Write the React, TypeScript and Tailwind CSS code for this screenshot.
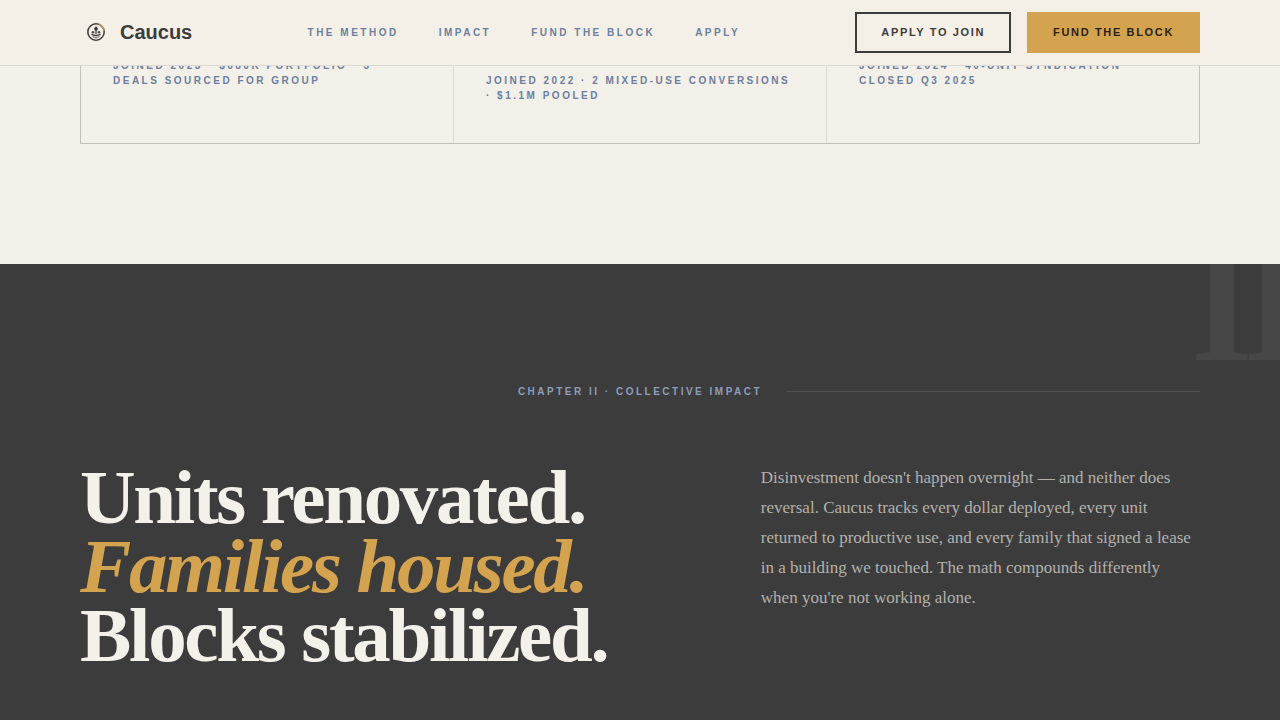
import React from 'react';

const navLinks = [
    { label: 'The Method', href: '#method' },
    { label: 'Impact', href: '#impact' },
    { label: 'Fund the Block', href: '#fund' },
    { label: 'Apply', href: '#apply' },
];

const members = [
    { id: 'first', meta: 'Joined 2023 · $680K portfolio · 3 deals sourced for group', pad: 'pt-[7px]' },
    { id: 'second', meta: 'Joined 2022 · 2 mixed-use conversions · $1.1M pooled', pad: 'pt-[22px]' },
    { id: 'third', meta: 'Joined 2024 · 40-unit syndication closed Q3 2025', pad: 'pt-[7px]' },
];

const LogoMark: React.FC = () => (
    <svg viewBox="0 0 32 32" className="w-8 h-8" fill="none" aria-hidden="true">
        <circle cx="16" cy="16" r="8.2" stroke="#3c3c3c" strokeWidth="1.5" />
        <path d="M18.5 8.2A8.2 8.2 0 0 1 24.1 15" stroke="#b98f55" strokeWidth="1.5" />
        <circle cx="16" cy="12.8" r="1.9" fill="#3c3c3c" />
        <path d="M16 10.4v7.6" stroke="#3c3c3c" strokeWidth="1.3" />
        <circle cx="13" cy="16.2" r="1.3" fill="#4a4a4a" />
        <circle cx="19" cy="16.2" r="1.3" fill="#4a4a4a" />
        <path d="M11.4 18.2c1.2 1 2.6 1.3 4.6 1.3s3.4-.3 4.6-1.3" stroke="#3c3c3c" strokeWidth="1.4" />
        <path d="M12.6 20.7c1 .6 2 .8 3.4.8s2.4-.2 3.4-.8" stroke="#5b6470" strokeWidth="1" />
    </svg>
);

const Header: React.FC = () => (
    <header className="sticky top-0 z-20 flex items-center justify-between px-20 py-3 bg-[#f4f0e8] border-b border-[#dcd8d2]">
        <a href="#top" className="flex items-center gap-2 pb-px">
            <LogoMark />
            <span className="text-xl font-bold text-[#3c3c3c]">Caucus</span>
        </a>
        <nav className="flex items-center gap-10">
            {navLinks.map((link) => (
                <a
                    key={link.href}
                    href={link.href}
                    className="text-[10px] leading-[15px] font-bold uppercase tracking-[0.25em] text-[#6b7f9e]"
                >
                    {link.label}
                </a>
            ))}
        </nav>
        <div className="flex items-center gap-4">
            <button className="px-6 py-3 border-2 border-[#3c3c3c] text-[11px] leading-[13px] font-bold uppercase tracking-[0.15em] text-[#3c3c3c]">
                Apply to Join
            </button>
            <button className="px-6 py-3 border-2 border-[#d4a34f] bg-[#d4a34f] text-[11px] leading-[13px] font-bold uppercase tracking-[0.15em] text-[#2a2118]">
                Fund the Block
            </button>
        </div>
    </header>
);

const Members: React.FC = () => (
    <section className="-mt-4 px-20 pb-30">
        <div className="grid grid-cols-3 gap-px bg-[#dcd9d3] border border-[#c3c0bb]">
            {members.map((m) => (
                <div key={m.id} className={`px-8 pb-10 bg-[#f3efe9] ${m.pad}`}>
                    <p className="text-[10px] leading-[15px] font-bold uppercase tracking-[0.25em] text-[#6b7f9e]">
                        {m.meta}
                    </p>
                </div>
            ))}
        </div>
    </section>
);

const Impact: React.FC = () => (
    <section id="impact" className="relative flex-1 overflow-hidden bg-[#3c3c3c] px-20 pt-30 pb-12">
        {/* Chapter numeral bleeding off the corner */}
        <span
            aria-hidden="true"
            className="absolute -top-[38px] -right-4 font-['Liberation_Serif',serif] text-[160px] leading-[160px] font-bold tracking-[-0.06em] text-[#474747] select-none"
        >
            II
        </span>

        <div className="flex items-center gap-6">
            <div className="flex-1" />
            <p className="text-[10px] leading-[15px] font-bold uppercase tracking-[0.25em] text-[#8d9dbd]">
                Chapter II · Collective Impact
            </p>
            <div className="flex-1 h-px bg-[#505050]" />
        </div>

        <div className="mt-16 grid grid-cols-[1.4fr_1fr] gap-[66px] font-['Liberation_Serif',serif]">
            <h2 className="text-[77px] leading-[69px] font-bold tracking-[-0.03em] text-[#f4f1ea]">
                Units renovated.
                <br />
                <em className="text-[#d4a34f]">Families housed.</em>
                <br />
                Blocks stabilized.
            </h2>
            <p className="text-[17px] leading-[30px] text-[#b3b1ad]">
                Disinvestment doesn't happen overnight — and neither does reversal. Caucus tracks every dollar
                deployed, every unit returned to productive use, and every family that signed a lease in a
                building we touched. The math compounds differently when you're not working alone.
            </p>
        </div>
    </section>
);

const App: React.FC = () => (
    <div id="top" className="min-h-screen flex flex-col bg-[#f3efe9] font-['Liberation_Sans',Arial,sans-serif]">
        <Header />
        <main className="flex-1 flex flex-col">
            <Members />
            <Impact />
        </main>
    </div>
);

export default App;
